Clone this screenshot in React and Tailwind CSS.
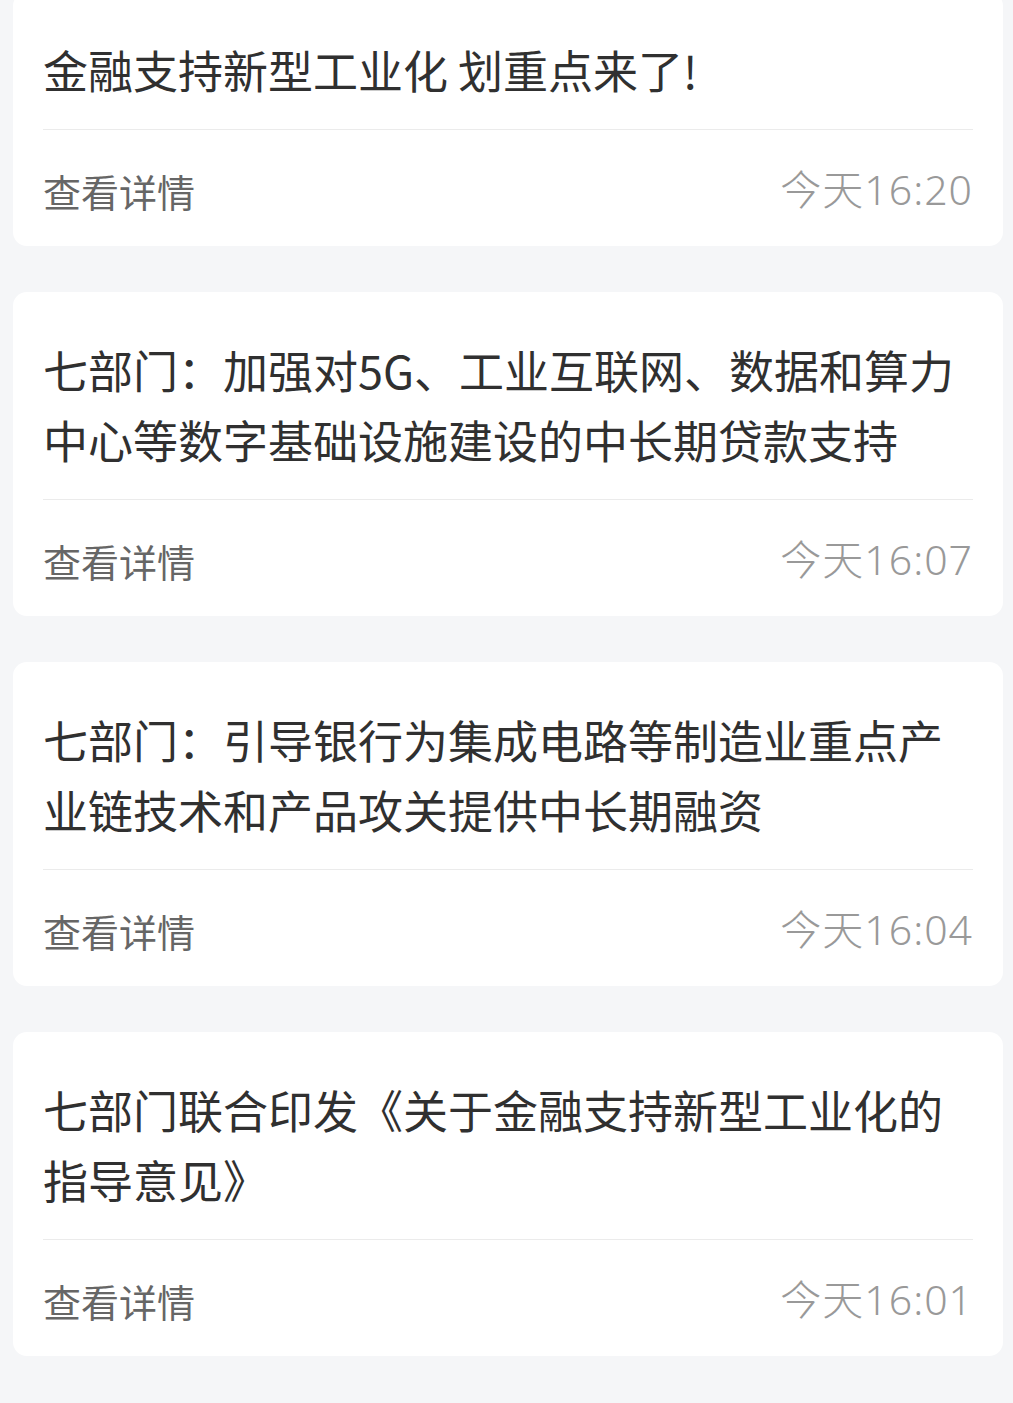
export default function App() {
  const items = [
    { title: "金融支持新型工业化 划重点来了!", time: "今天16:20" },
    { title: "七部门：加强对5G、工业互联网、数据和算力中心等数字基础设施建设的中长期贷款支持", time: "今天16:07" },
    { title: "七部门：引导银行为集成电路等制造业重点产业链技术和产品攻关提供中长期融资", time: "今天16:04" },
    { title: "七部门联合印发《关于金融支持新型工业化的指导意见》", time: "今天16:01" },
  ];
  return (
    <div
      className="min-h-[1403px] bg-[#f5f6f8] pb-[46px] overflow-hidden"
      style={{ fontFamily: '"Noto Sans CJK SC", "Noto Sans", sans-serif' }}
    >
      <div className="-mt-2 flex flex-col gap-[46px]">
        {items.map((it, i) => (
          <div key={i} className="ml-[13px] mr-[10px] bg-white rounded-[14px] px-[30px]">
            <div className="pt-[43px] pb-[24px] text-[45px] font-normal leading-[70px] text-[#303030]">
              {it.title}
            </div>
            <div className="h-px bg-[#ebebeb]" />
            <div className="h-[116px] pt-[4px] flex items-center justify-between">
              <span className="text-[38px] font-normal text-[#666666]">查看详情</span>
              <span
                className="text-[41px] font-light tracking-[1px] text-[#999999]"
                style={{ fontFamily: '"Noto Sans", "Noto Sans CJK SC", sans-serif' }}
              >
                {it.time}
              </span>
            </div>
          </div>
        ))}
      </div>
    </div>
  );
}
